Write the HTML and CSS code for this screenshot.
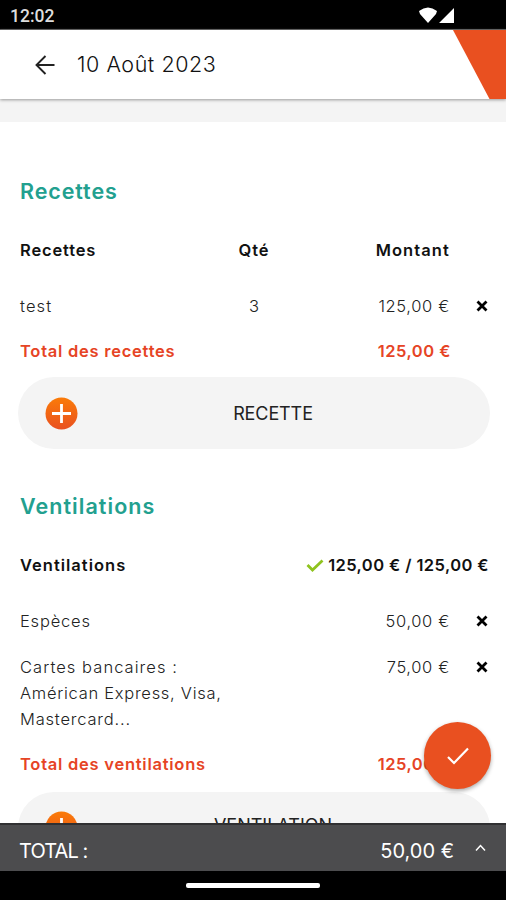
FILE: index.html
```html
<!DOCTYPE html>
<html lang="fr">
<head>
<meta charset="utf-8">
<meta name="viewport" content="width=device-width, initial-scale=1">
<title>10 Août 2023</title>
<link rel="stylesheet" href="styles.css">
</head>
<body>
<div class="screen">
  <div class="status">
    <span class="clock">12:02</span>
    <svg class="signals" width="36" height="17" viewBox="0 0 36 17"><path d="M0 4Q9-3 18 4L17 7 9 16 1 7ZM20 16 35 1V16Z" fill="#fff"/></svg>
  </div>
  <header class="appbar">
    <svg class="back" width="20" height="20" viewBox="0 0 20 20"><path d="M19.5 10H1.5M10.5 1 1.5 10 10.5 19" fill="none" stroke="#222" stroke-width="1.9"/></svg>
    <h1 class="title">10 Août 2023</h1>
    <svg class="corner" width="53" height="69" viewBox="0 0 53 69"><path d="M0 0H53V69H36.500Z" fill="#e95020"/></svg>
  </header>
  <main class="content">
    <section class="section">
      <h2 class="heading heading-r">Recettes</h2>
      <div class="row head"><span class="h-rec">Recettes</span><span class="qty h-qty">Qté</span><span class="amount h-amt">Montant</span></div>
      <div class="row item"><span class="n-test">test</span><span class="qty">3</span><span class="amount a-125">125,00 €</span><svg class="cross" width="12" height="12" viewBox="0 0 12 12"><path d="M1.500 1.500 10.500 10.500M10.500 1.500 1.500 10.500" stroke="#000" stroke-width="2.800"/></svg></div>
      <div class="row total"><span class="t-rec">Total des recettes</span><span class="amount a-tot">125,00 €</span></div>
      <button class="add"><svg class="plus" width="33" height="33" viewBox="0 0 33 33"><defs><linearGradient id="g" x1="0" y1="0" x2="0" y2="1"><stop offset="0" stop-color="#fa7b08"/><stop offset="1" stop-color="#e95020"/></linearGradient></defs><circle cx="16.500" cy="16.500" r="16" fill="url(#g)"/><path d="M7 16.500H26M16.500 7V26" stroke="#fff" stroke-width="2.800"/></svg><span class="add-label">RECETTE</span></button>
    </section>
    <section class="section second">
      <h2 class="heading heading-v">Ventilations</h2>
      <div class="row head"><span class="h-ven">Ventilations</span><span class="ratio"><svg width="18" height="13" viewBox="0 0 18 13"><path d="M1.500 6 6.500 11 16.500 1.500" fill="none" stroke="#8fc31f" stroke-width="2.800"/></svg><span class="ratio-text">125,00 € / 125,00 €</span></span></div>
      <div class="row item"><span class="n-esp">Espèces</span><span class="amount a-50">50,00 €</span><svg class="cross" width="12" height="12" viewBox="0 0 12 12"><path d="M1.500 1.500 10.500 10.500M10.500 1.500 1.500 10.500" stroke="#000" stroke-width="2.800"/></svg></div>
      <div class="row item cards"><span><span class="n-c1">Cartes bancaires :</span><br><span class="n-c2">Américan Express, Visa,</span><br><span class="n-c3">Mastercard...</span></span><span class="amount a-50">75,00 €</span><svg class="cross" width="12" height="12" viewBox="0 0 12 12"><path d="M1.500 1.500 10.500 10.500M10.500 1.500 1.500 10.500" stroke="#000" stroke-width="2.800"/></svg></div>
      <div class="row total"><span class="t-ven">Total des ventilations</span><span class="amount a-tot">125,00 €</span></div>
      <button class="add add-v"><svg class="plus" width="33" height="33" viewBox="0 0 33 33"><circle cx="16.500" cy="16.500" r="16" fill="url(#g)"/><path d="M7 16.500H26M16.500 7V26" stroke="#fff" stroke-width="2.800"/></svg><span class="add-label label-v">VENTILATION</span></button>
    </section>
  </main>
  <footer class="totalbar">
    <span class="bar-label">TOTAL :</span><span class="bar-amount">50,00 €</span>
    <svg class="chevron" width="11" height="8" viewBox="0 0 11 8"><path d="M1 6.500 5.500 1.500 10 6.500" fill="none" stroke="#fff" stroke-width="1.500"/></svg>
  </footer>
  <div class="navbar"><div class="pill"></div></div>
  <button class="fab"><svg width="22" height="18" viewBox="0 0 22 18"><path d="M1 10 7 16 21 1.500" fill="none" stroke="#fff" stroke-width="2.200"/></svg></button>
</div>
</body>
</html>
```
FILE: styles.css
```css
* { box-sizing: border-box; }
body { margin: 0; font-family: Inter, "Liberation Sans", sans-serif; background: #fff; }
h1, h2 { margin: 0; }
button { border: 0; padding: 0; font: inherit; }
span { white-space: nowrap; }
svg { flex: none; display: block; }
.screen { position: relative; width: 506px; height: 900px; overflow: hidden; display: flex; flex-direction: column; }
.status { height: 30px; flex: none; background: #000; border-bottom: 1px solid #555; display: flex; align-items: flex-start; padding: 6px 51px 0 10px; justify-content: space-between; }
.clock { color: #ddd; font: 500 17.5px/20px Roboto, sans-serif; }
.signals { margin-top: 1px; }
.appbar { height: 69px; flex: none; background: #fff; display: flex; align-items: center; padding-left: 35px; box-shadow: 0 1px 3px #999; z-index: 1; }
.title { margin: -2px 0 0 22px; font-size: 21.5px; font-weight: 300; line-height: 30px; letter-spacing: .55px; color: #111; white-space: nowrap; }
.corner { margin-left: auto; }
.content { height: 724px; flex: none; border-top: 23px solid #f4f4f4; padding-top: 56px; overflow: hidden; background: #fff; }
.second { margin-top: 44px; }
.heading { padding-left: 20px; font-size: 21.5px; line-height: 26px; font-weight: 600; color: #22a08f; white-space: nowrap; }
.heading-r { letter-spacing: .9px; }
.heading-v { letter-spacing: 1.05px; }
.row { display: grid; grid-template-columns: 204px 60px 165px 40px; padding-left: 20px; font-size: 16.5px; line-height: 26px; }
.row > * { grid-row: 1; }
.head { margin-top: 33px; font-weight: 600; color: #111; }
.item { margin-top: 30px; font-weight: 300; color: #222; }
.cards { margin-top: 20px; }
.total { margin-top: 19px; font-weight: 600; color: #e64425; }
.cards + .total { margin-top: 19px; }
.h-rec { letter-spacing: .85px; }
.h-ven { letter-spacing: 1px; }
.t-rec { letter-spacing: .75px; }
.t-ven { letter-spacing: .75px; }
.n-test { letter-spacing: 1.1px; }
.n-esp { letter-spacing: .8px; }
.n-c1 { letter-spacing: 1.05px; }
.n-c2 { letter-spacing: .72px; }
.n-c3 { letter-spacing: .8px; }
.qty { grid-column: 2; text-align: center; }
.h-qty { letter-spacing: .9px; }
.amount { grid-column: 3; text-align: right; letter-spacing: .65px; margin-right: -1px; }
.h-amt { letter-spacing: 1.1px; }
.a-tot { letter-spacing: .5px; margin-right: -2px; }
.cross { grid-column: 4; justify-self: end; margin: 7px 1px 0 0; }
.ratio { grid-column: 2 / 5; display: flex; justify-content: flex-end; align-items: center; gap: 4px; }
.ratio-text { letter-spacing: .42px; }
.add { margin: 13px 0 0 18px; width: 472px; height: 72px; border-radius: 36px; background: #f4f4f4; display: flex; align-items: center; padding-left: 27px; }
.add-v { margin-top: 15px; padding-bottom: 2px; }
.add-label { flex: 1; padding-right: 22px; text-align: center; font-size: 18px; letter-spacing: -.1px; color: #222; }
.label-v { padding-bottom: 3px; letter-spacing: 0; }
.totalbar { height: 48px; flex: none; background: #4c4c4e; border-top: 2px solid #303032; color: #fff; display: flex; align-items: center; padding: 5px 20px 0 19px; font-size: 20px; line-height: 26px; }
.bar-label { letter-spacing: -.9px; }
.bar-amount { margin-left: auto; }
.chevron { margin: -5px 0 0 21px; }
.navbar { height: 29px; flex: none; background: #000; display: flex; justify-content: center; padding-top: 12px; }
.pill { width: 134px; height: 5px; border-radius: 2px; background: #fff; }
.fab { position: absolute; left: 424px; top: 722px; width: 67px; height: 67px; border-radius: 50%; background: #e95020; box-shadow: 0 2px 4px #0005; display: flex; align-items: center; justify-content: center; z-index: 2; }
```
